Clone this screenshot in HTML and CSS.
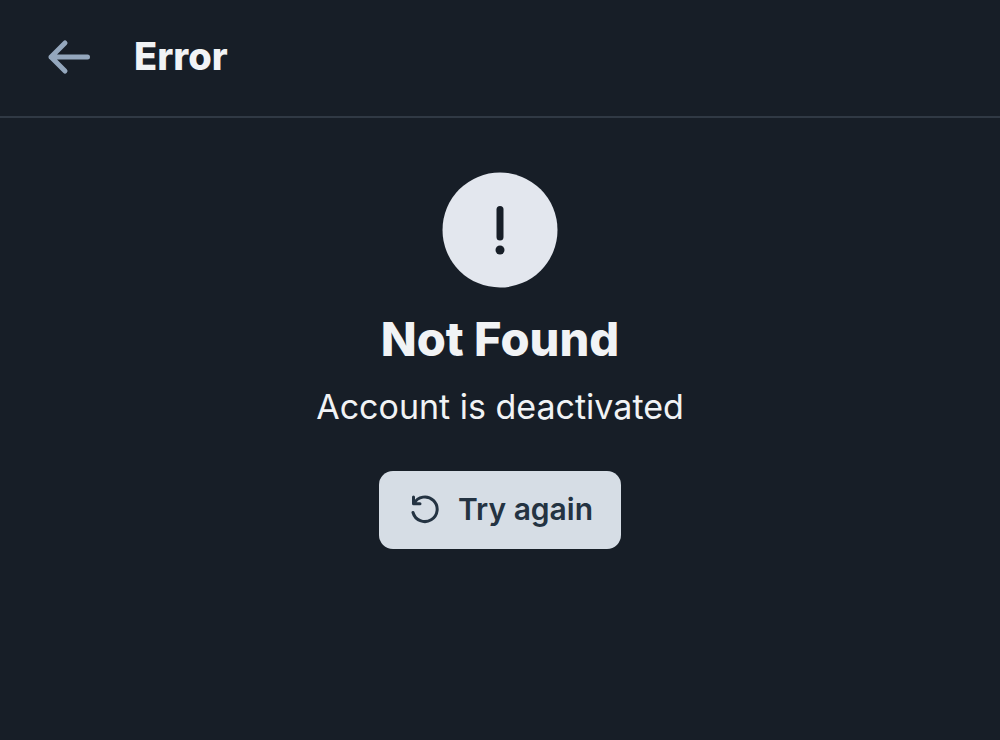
FILE: index.html
```html
<!DOCTYPE html>
<html lang="en">
<head>
<meta charset="utf-8">
<meta name="viewport" content="width=device-width, initial-scale=1">
<title>Error</title>
<link rel="stylesheet" href="styles.css">
</head>
<body>
<header class="header">
  <button class="back" type="button" aria-label="Go back">
    <svg class="back-icon" viewBox="0 0 42 36" aria-hidden="true"><path d="M17 5 3 19l14 14M3 19h36.500"/></svg>
  </button>
  <h1 class="header-title">Error</h1>
</header>
<main class="content">
  <svg class="alert" viewBox="0 0 116 116" aria-hidden="true">
    <circle class="alert-disc" cx="58" cy="58" r="57.5"/>
    <path class="alert-bar" d="M58 37.500v27.500"/>
    <circle class="alert-dot" cx="58" cy="78" r="4.5"/>
  </svg>
  <h2 class="title">Not Found</h2>
  <p class="message">Account is deactivated</p>
  <button class="retry" type="button">
    <svg class="retry-icon" viewBox="0 0 30 30" aria-hidden="true"><path d="M3.500 3v6.800H10M4 9.500A12.300 12.300 0 1 1 3 18.500"/></svg>
    <span>Try again</span>
  </button>
</main>
</body>
</html>
```
FILE: styles.css
```css
* { box-sizing: border-box; }
body {
  margin: 0;
  min-height: 100vh;
  background: #171e27;
  color: #f1f3f5;
  font-family: Inter, "Liberation Sans", sans-serif;
}
.header {
  display: flex;
  align-items: center;
  gap: 44px;
  padding: 32px 48px 36px;
  border-bottom: 2px solid #303944;
}
.back {
  display: flex;
  padding: 0;
  border: 0;
  background: none;
  color: #94a7bd;
}
.back-icon {
  width: 42px;
  height: 36px;
  fill: none;
  stroke: currentColor;
  stroke-width: 5;
  stroke-linecap: round;
  stroke-linejoin: round;
  overflow: visible;
}
.header-title {
  margin: 0;
  font-size: 38px;
  line-height: 48px;
  font-weight: 800;
}
.content {
  display: flex;
  flex-direction: column;
  align-items: center;
  padding: 54px 24px;
}
.alert {
  width: 116px;
  height: 116px;
}
.alert-disc { fill: #e3e7ee; }
.alert-dot { fill: #171e27; }
.alert-bar {
  stroke: #171e27;
  stroke-width: 7;
  stroke-linecap: round;
}
.title {
  margin: 22px 0 0;
  font-size: 47px;
  line-height: 58px;
  font-weight: 800;
}
.message {
  margin: 16px 0 0;
  font-size: 34px;
  line-height: 46px;
}
.retry {
  display: flex;
  align-items: center;
  gap: 18px;
  margin-top: 41px;
  padding: 18px 28px 20px 31px;
  border: 0;
  border-radius: 14px;
  background: #d6dde5;
  color: #243342;
  font: 600 30px/40px Inter, "Liberation Sans", sans-serif;
}
.retry-icon {
  width: 30px;
  height: 30px;
  fill: none;
  stroke: currentColor;
  stroke-width: 3;
  stroke-linecap: round;
  stroke-linejoin: round;
}
```
